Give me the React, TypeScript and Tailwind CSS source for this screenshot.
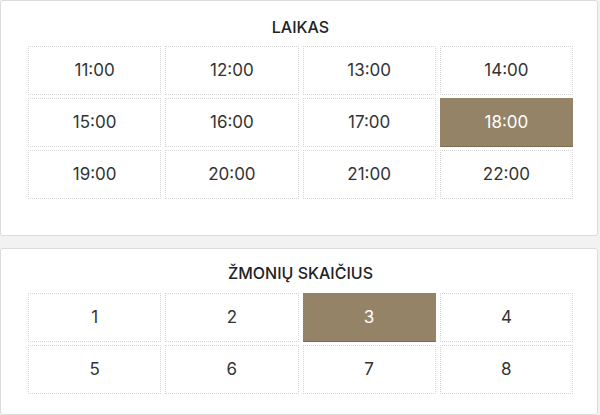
import React, { useState } from "react";

const times = [
  "11:00", "12:00", "13:00", "14:00",
  "15:00", "16:00", "17:00", "18:00",
  "19:00", "20:00", "21:00", "22:00",
];

const people = ["1", "2", "3", "4", "5", "6", "7", "8"];

interface OptionGridProps {
  items: string[];
  selected: string;
  onSelect: (v: string) => void;
}

const OptionGrid = ({ items, selected, onSelect }: OptionGridProps) => (
  <div className="w-[545px] grid grid-cols-4 gap-x-[4px] gap-y-[3px]">
    {items.map((item) => {
      const active = item === selected;
      return (
        <button
          key={item}
          onClick={() => onSelect(item)}
          className={
            active
              ? "h-[49px] border border-[#948366] border-b-[#7d6d50] bg-[#948366] text-white text-[17px]"
              : "h-[49px] border border-dotted border-[#d6d6d6] bg-white text-[#333] text-[17px]"
          }
        >
          {item}
        </button>
      );
    })}
  </div>
);

export default function App() {
  const [time, setTime] = useState("18:00");
  const [count, setCount] = useState("3");

  return (
    <div
      className="w-[600px] h-[415px] overflow-hidden bg-[#f2f2f2] flex flex-col gap-[12px]"
      style={{ fontFamily: "Inter, 'Noto Sans', sans-serif" }}
    >
      <section className="w-[598px] h-[236px] bg-white border border-[#dcdcdc] rounded-[3px] pl-[27px] pt-[14px]">
        <h2 className="w-[545px] text-center text-[16px] leading-[24px] font-medium text-[#222] mb-[7px]">LAIKAS</h2>
        <OptionGrid items={times} selected={time} onSelect={setTime} />
      </section>
      <section className="w-[598px] flex-1 bg-white border border-[#dcdcdc] rounded-[3px] pl-[27px] pt-[12px]">
        <h2 className="w-[545px] text-center text-[16px] leading-[24px] font-medium text-[#222] mb-[8px]">ŽMONIŲ SKAIČIUS</h2>
        <OptionGrid items={people} selected={count} onSelect={setCount} />
      </section>
    </div>
  );
}
